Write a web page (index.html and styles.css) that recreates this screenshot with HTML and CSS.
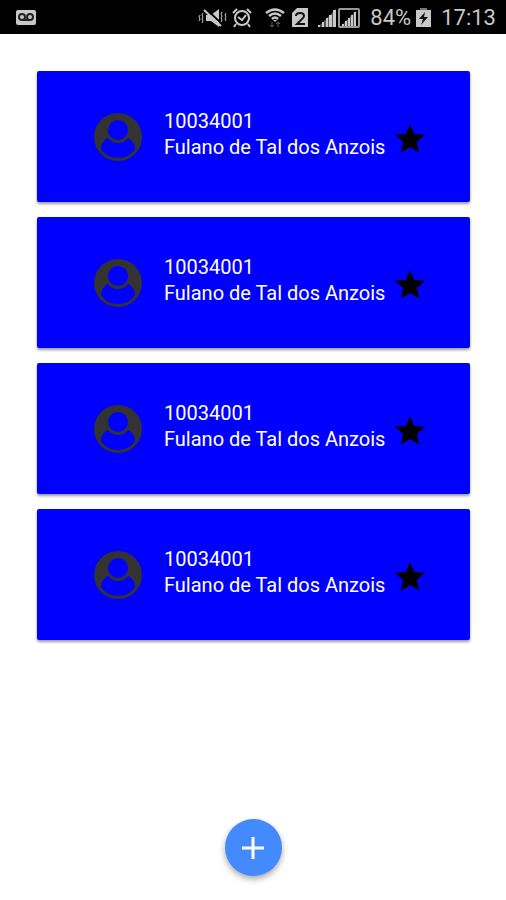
FILE: index.html
```html
<!DOCTYPE html>
<html lang="pt-BR">
<head>
  <meta charset="UTF-8">
  <meta name="viewport" content="width=device-width, initial-scale=1.0">
  <title>Contatos</title>
  <link rel="stylesheet" href="styles.css">
</head>
<body>
  <svg class="defs" aria-hidden="true">
    <symbol id="avatar" viewBox="0 0 48 48">
      <circle cx="24" cy="24" r="24" fill="#333"/>
      <path d="M14 25C10 27 7 31 7 36C11 42 17 45 24 45C31 45 37 42 41 36C41 31 38 27 34 25C32 28 28 30 24 30C20 30 16 28 14 25Z" fill="#00f"/>
      <ellipse cx="24" cy="18" rx="11" ry="11" fill="#333"/>
      <ellipse cx="24" cy="17" rx="10" ry="10" fill="#00f"/>
    </symbol>
    <symbol id="star" viewBox="0 0 24 24">
      <path d="M12 17.270L18.180 21l-1.640-7.030L22 9.240l-7.190-.610L12 2 9.190 8.630 2 9.240l5.460 4.730L5.820 21z"/>
    </symbol>
  </svg>

  <header class="status-bar">
    <svg class="voicemail" width="20" height="16" viewBox="0 0 20 16">
      <rect width="20" height="15" rx="2" fill="#c8c8c8"/>
      <g fill="none" stroke="#222" stroke-width="2">
        <circle cx="6" cy="7" r="3"/>
        <circle cx="14" cy="7" r="3"/>
        <path d="M6 10h8"/>
      </g>
    </svg>
    <div class="status-icons">
      <svg width="30" height="20" viewBox="0 0 30 20">
        <path d="M8 7h5l8-6v18l-8-6H8z" fill="#c8c8c8"/>
        <path d="M8 1l16 15" stroke="#000" stroke-width="2"/>
        <path d="M6 2l17 16" stroke="#c8c8c8" stroke-width="2"/>
        <path d="M5 5l-1 2 1 2-1 2 1 2-1 2M2 7l-1 2 1 2-1 2M24 4l-1 2 1 2-1 2 1 2-1 2M28 5l-1 2 1 2-1 2 1 2" fill="none" stroke="#c8c8c8"/>
      </svg>
      <svg width="20" height="20" viewBox="0 0 20 20">
        <g fill="none" stroke="#c8c8c8" stroke-width="2">
          <circle cx="10" cy="10" r="7"/>
          <path d="M1 5l4-4M19 5l-4-4M4 16l-2 3M16 16l2 3M6 9l4 3 4-5"/>
        </g>
      </svg>
      <svg class="wifi" width="22" height="20" viewBox="0 0 22 20">
        <g fill="none" stroke="#c8c8c8" stroke-width="2.500">
          <path d="M2 5q9-7 18 0M5 8q6-5 12 0M8 11q3-3 6 0"/>
        </g>
        <path d="M9 12h4l-2 2z" fill="#c8c8c8"/>
        <path d="M8 14v5M6 17l2 2 2-2M14 19v-5M12 16l2-2 2 2" fill="none" stroke="#666"/>
      </svg>
      <svg class="sim" width="16" height="20" viewBox="0 0 16 20">
        <path d="M5 0h11v19H0V5z" fill="#c8c8c8"/>
        <path d="M4 8q0-3 4-3t4 3q0 2-3 4l-4 4h8" fill="none" stroke="#111" stroke-width="2"/>
      </svg>
      <svg class="signal" width="18" height="20" viewBox="0 0 18 20">
        <path d="M0 19L18 1v18z" fill="#555"/>
        <path d="M0 17h2v2H0zM4 14h2v5H4zM8 10h2v9H8zM11 7h3v12h-3zM15 2h3v17h-3z" fill="#c8c8c8"/>
      </svg>
      <svg class="signal-two" width="22" height="20" viewBox="0 0 22 20">
        <rect x="1" y="1" width="20" height="18" rx="1" fill="none" stroke="#999" stroke-width="2"/>
        <path d="M3 18L18 3v15z" fill="#555"/>
        <path d="M4 16h2v2H4zM7 13h2v5H7zM10 10h2v8h-2zM13 7h2v11h-2zM16 4h2v14h-2z" fill="#c8c8c8"/>
      </svg>
      <span class="battery-level">84%</span>
      <svg class="battery" width="15" height="20" viewBox="0 0 15 20">
        <path d="M4 0h7v3H4z" fill="#777"/>
        <path d="M0 2h15v17H0z" fill="#c8c8c8"/>
        <path d="M9 4l-6 7h4l-2 6 7-8H8z" fill="#111"/>
      </svg>
      <time class="clock">17:13</time>
    </div>
  </header>

  <main class="cards">
    <article class="card">
      <svg class="avatar"><use href="#avatar"/></svg>
      <div class="info">
        <div>10034001</div>
        <div>Fulano de Tal dos Anzois</div>
      </div>
      <button class="favorite" type="button" aria-label="Favorito"><svg><use href="#star"/></svg></button>
    </article>
    <article class="card">
      <svg class="avatar"><use href="#avatar"/></svg>
      <div class="info">
        <div>10034001</div>
        <div>Fulano de Tal dos Anzois</div>
      </div>
      <button class="favorite" type="button" aria-label="Favorito"><svg><use href="#star"/></svg></button>
    </article>
    <article class="card">
      <svg class="avatar"><use href="#avatar"/></svg>
      <div class="info">
        <div>10034001</div>
        <div>Fulano de Tal dos Anzois</div>
      </div>
      <button class="favorite" type="button" aria-label="Favorito"><svg><use href="#star"/></svg></button>
    </article>
    <article class="card">
      <svg class="avatar"><use href="#avatar"/></svg>
      <div class="info">
        <div>10034001</div>
        <div>Fulano de Tal dos Anzois</div>
      </div>
      <button class="favorite" type="button" aria-label="Favorito"><svg><use href="#star"/></svg></button>
    </article>
  </main>

  <footer class="actions">
    <button class="fab" type="button" aria-label="Adicionar">
      <svg width="22" height="22" viewBox="0 0 22 22"><path d="M11 0v22M0 11h22" stroke="#fff" stroke-width="3"/></svg>
    </button>
  </footer>
</body>
</html>
```
FILE: styles.css
```css
* {
  box-sizing: border-box;
}
body {
  margin: 0;
  min-height: 100vh;
  display: flex;
  flex-direction: column;
  background: #fff;
  font-family: Roboto, sans-serif;
}
svg {
  display: block;
  flex: none;
}
button {
  border: none;
  padding: 0;
  cursor: pointer;
}
.defs {
  position: absolute;
  width: 0;
  height: 0;
}
.status-bar {
  height: 34px;
  padding: 2px 10px 0 16px;
  display: flex;
  align-items: center;
  justify-content: space-between;
  background: #000;
  color: #c8c8c8;
  font-size: 22px;
  line-height: 32px;
}
.status-icons {
  display: flex;
  align-items: center;
}
.status-icons svg {
  margin-right: 4px;
}
.status-icons .wifi {
  margin-left: 8px;
  margin-right: 6px;
}
.status-icons .sim {
  margin-right: 10px;
}
.status-icons .signal {
  margin-right: 2px;
}
.status-icons .signal-two {
  margin-right: 10px;
}
.status-icons .battery {
  margin-left: 5px;
  margin-right: 10px;
}
.cards {
  padding: 37px 36px 0 37px;
  display: flex;
  flex-direction: column;
  gap: 15px;
}
.card {
  min-height: 131px;
  padding: 37px 42px 37px 57px;
  display: flex;
  align-items: flex-start;
  background: #00f;
  color: #fff;
  border-radius: 2px;
  box-shadow: 0 2px 3px rgba(0, 0, 0, 0.4);
}
.avatar {
  width: 48px;
  height: 48px;
  margin-top: 5px;
}
.info {
  flex: 1;
  margin-left: 22px;
  font-size: 20px;
  line-height: 26px;
}
.favorite {
  margin-top: 13px;
  background: none;
}
.favorite svg {
  width: 36px;
  height: 36px;
}
.actions {
  margin-top: auto;
  padding: 24px 0;
  display: flex;
  justify-content: center;
}
.fab {
  width: 57px;
  height: 57px;
  border-radius: 50%;
  display: flex;
  align-items: center;
  justify-content: center;
  background: #448aff;
  box-shadow: 0 3px 6px rgba(0, 0, 0, 0.35);
}
```
